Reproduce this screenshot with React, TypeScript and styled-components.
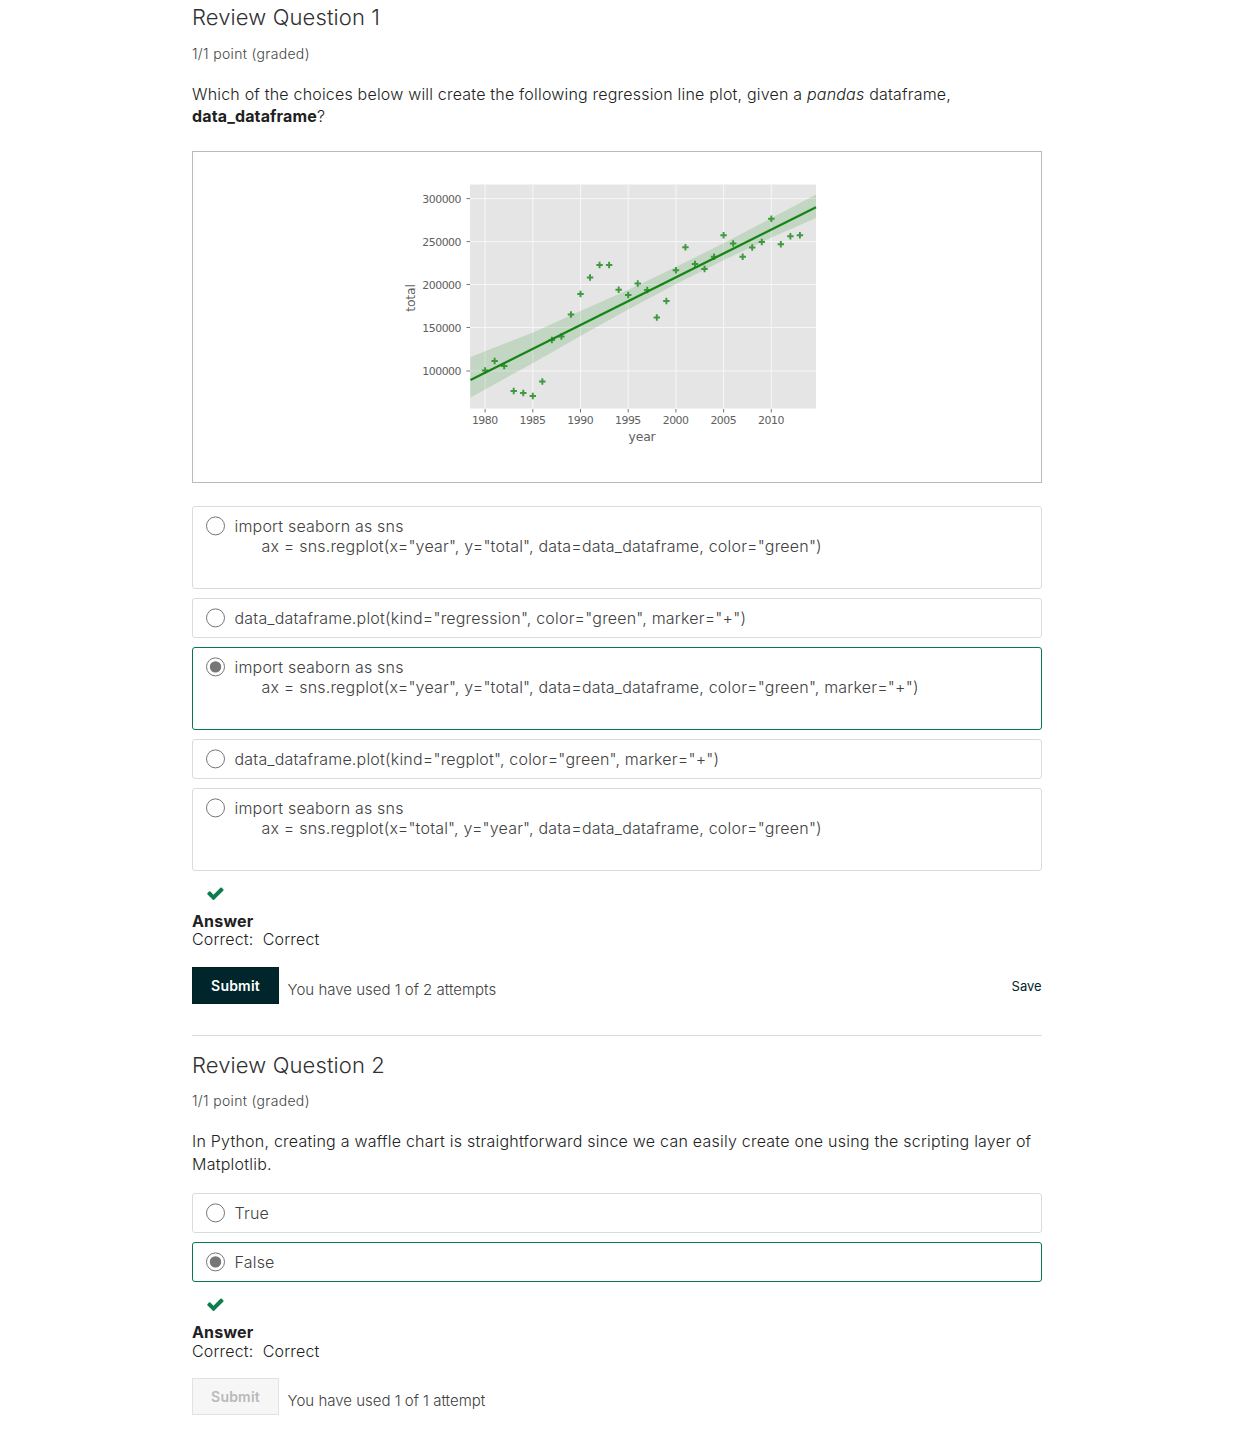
import React from "react";
import styled, { createGlobalStyle } from "styled-components";

const GlobalStyle = createGlobalStyle`
  * { box-sizing: border-box; }
  body {
    margin: 0;
    background: #fff;
    color: #212529;
    font-family: Inter, "Liberation Sans", sans-serif;
    font-weight: 300;
  }
`;

const Page = styled.main`
  width: 850px;
  margin-left: 192px;
  height: 1436px;
  overflow: hidden;
`;

const Problem = styled.section<{ $divided?: boolean }>`
  display: flow-root;
  height: ${(p) => (p.$divided ? "400px" : "1036px")};
  border-bottom: ${(p) => (p.$divided ? "0" : "1px solid #dcdcdc")};
`;

const Title = styled.h3<{ $top: number }>`
  margin: ${(p) => p.$top}px 0 0;
  font-size: 22px;
  line-height: 28px;
  font-weight: 300;
  letter-spacing: 0.12px;
  color: #313131;
`;

const Progress = styled.div<{ $top: number }>`
  margin-top: ${(p) => p.$top}px;
  font-size: 14px;
  line-height: 20px;
  letter-spacing: 0.33px;
  color: #454545;
`;

const Prompt = styled.p<{ $spacing: number; $leading: number }>`
  height: 45px;
  margin: 19px 0 0;
  font-size: 16px;
  line-height: ${(p) => p.$leading}px;
  letter-spacing: ${(p) => p.$spacing}px;
  color: #212121;

  strong { font-weight: 700; letter-spacing: 0.14px; }
`;

const Figure = styled.div`
  height: 332px;
  margin-top: 23px;
  padding: 19px 0 0 207px;
  border: 1px solid #b9bcbc;
`;

const Chart = styled.svg`
  display: block;
  font-family: "DejaVu Sans", sans-serif;
  font-size: 10.9px;
  letter-spacing: -0.48px;
  font-weight: 400;
  fill: #606060;
`;

const AxisTitle = styled.text`
  font-size: 12.4px;
  letter-spacing: -0.2px;
`;

const Choices = styled.div<{ $top: number }>`
  display: flex;
  flex-direction: column;
  gap: 9px;
  margin-top: ${(p) => p.$top}px;
`;

const Choice = styled.label<{ $selected?: boolean; $tall?: boolean }>`
  display: flex;
  align-items: flex-start;
  height: ${(p) => (p.$tall ? 83 : 40)}px;
  padding: 9px 13px;
  border: 1px solid ${(p) => (p.$selected ? "#0a7650" : "#dadcdc")};
  border-radius: 3px;
`;

const Radio = styled.svg`
  flex: none;
  display: block;
  width: 19px;
  height: 20px;
  margin-right: 9.5px;
`;

const ChoiceText = styled.span`
  font-size: 16px;
  line-height: 20.4px;
  letter-spacing: 0.195px;
  white-space: pre;
  color: #414141;
`;

const CodeLine = styled.span`
  display: block;
  padding-left: 27px;
`;

const Status = styled.div`
  height: 19px;
  margin: 12.5px 0 0 14px;

  svg { display: block; }
`;

const Answer = styled.div<{ $leading: number }>`
  height: 37px;
  margin-top: 9.5px;
  font-size: 16px;
  line-height: ${(p) => p.$leading}px;
  letter-spacing: 0.17px;
  color: #212121;
  white-space: pre;

  strong { display: block; font-weight: 700; }
`;

const Actions = styled.div`
  display: flex;
  align-items: flex-start;
  height: 37px;
  margin-top: 18px;
`;

const Submit = styled.button`
  width: 87px;
  height: 37px;
  padding: 0;
  border: 1px solid #002121;
  border-radius: 0;
  background: #00262b;
  color: #fff;
  font: 600 14px/20px Inter, sans-serif;
  letter-spacing: 0.2px;

  &:disabled {
    border-color: #e2e2e2;
    background: #f6f6f6;
    color: #b9b9b9;
  }
`;

const Attempts = styled.span`
  flex: 1;
  margin: 12px 0 0 8.6px;
  font-size: 15px;
  line-height: 22px;
  color: #414141;
`;

const Save = styled.button`
  padding: 0;
  margin: 9px 0.3px 0 0;
  border: 0;
  background: none;
  color: #00262b;
  font: 400 13px/20px Inter, sans-serif;
`;

const points = [
  370.5, 361, 366, 391, 393, 396, 381.5, 340, 336.5, 314.5, 294, 277.5, 265, 265, 289.7, 295, 283.5,
  290, 317.5, 301, 270.3, 247.3, 264, 269, 256.7, 235.3, 243.5, 256.7, 247.5, 242, 218.7, 244.3,
  236.2, 235.3,
];
const rows = [198.6, 241.6, 284.5, 327.5, 371];
const columns = [1980, 1985, 1990, 1995, 2000, 2005, 2010];
const xOf = (year: number) => 485.1 + (year - 1980) * 9.54;

function RegressionPlot() {
  return (
    <Chart width="430" height="290" viewBox="400 171 430 290">
      <rect x="470" y="184.5" width="346" height="224" fill="#e5e5e5" />
      {rows.map((y, i) => (
        <g key={y}>
          <path d={`M470 ${y}H816`} stroke="#f7f7f7" />
          <path d={`M466.5 ${y}H470`} stroke="#777" />
          <text x="461" y={y + 4} textAnchor="end">{300000 - i * 50000}</text>
        </g>
      ))}
      {columns.map((year) => (
        <g key={year}>
          <path d={`M${xOf(year)} 184.5V408.5`} stroke="#f7f7f7" />
          <path d={`M${xOf(year)} 409V412.5`} stroke="#777" />
          <text x={xOf(year) - 0.3} y="424" textAnchor="middle">{year}</text>
        </g>
      ))}
      <path
        d="M470.5 357L533 332.5L580.5 311L629 289.5L676 267L724 243L771.5 218L816 194.5V218L771.5 237.5L724 260L676 284L629 309L580.5 336L533 363L470.5 397.5Z"
        fill="#008000"
        fillOpacity="0.15"
      />
      <path
        d={points.map((y, i) => `M${xOf(1980 + i) - 3.2} ${y}h6.4m-3.2-3.2v6.4`).join("")}
        stroke="#168616"
        strokeOpacity="0.8"
        strokeWidth="1.9"
        fill="none"
      />
      <path d="M470.5 380L816 207.3" stroke="#158515" strokeWidth="2.3" />
      <AxisTitle x="642" y="440.5" textAnchor="middle">year</AxisTitle>
      <AxisTitle transform="translate(415 298) rotate(-90)" textAnchor="middle">total</AxisTitle>
    </Chart>
  );
}

function CheckMark() {
  return (
    <Status>
      <svg width="18.8" height="18.8" viewBox="0 0 1792 1792" fill="#0d7d4d">
        <path d="M1671 566q0 40-28 68l-724 724-136 136q-28 28-68 28t-68-28l-136-136-362-362q-28-28-28-68t28-68l136-136q28-28 68-28t68 28l294 295 656-657q28-28 68-28t68 28l136 136q28 28 28 68z" />
      </svg>
    </Status>
  );
}

type Option = { text: string; code?: string; selected?: boolean };

function ChoiceList({ options, top }: { options: Option[]; top: number }) {
  return (
    <Choices $top={top}>
      {options.map((o, i) => (
        <Choice key={i} $selected={o.selected} $tall={!!o.code}>
          <Radio viewBox="0 0 19 20">
            <circle cx="9.5" cy="9.9" r="9" fill="#fff" stroke="#767676" />
            {o.selected && <circle cx="9.5" cy="9.9" r="5.7" fill="#767676" />}
          </Radio>
          <ChoiceText>
            {o.text}
            {o.code && <CodeLine>{o.code}</CodeLine>}
          </ChoiceText>
        </Choice>
      ))}
    </Choices>
  );
}

const firstOptions: Option[] = [
  { text: "import seaborn as sns", code: 'ax = sns.regplot(x="year", y="total", data=data_dataframe, color="green")' },
  { text: 'data_dataframe.plot(kind="regression", color="green", marker="+")' },
  {
    text: "import seaborn as sns",
    code: 'ax = sns.regplot(x="year", y="total", data=data_dataframe, color="green", marker="+")',
    selected: true,
  },
  { text: 'data_dataframe.plot(kind="regplot", color="green", marker="+")' },
  { text: "import seaborn as sns", code: 'ax = sns.regplot(x="total", y="year", data=data_dataframe, color="green")' },
];

export default function App() {
  return (
    <Page>
      <GlobalStyle />
      <Problem>
        <Title $top={3}>Review Question 1</Title>
        <Progress $top={13}>1/1 point (graded)</Progress>
        <Prompt $spacing={0.195} $leading={22}>
          Which of the choices below will create the following regression line plot, given a <em>pandas</em>{" "}
          dataframe, <strong>data_dataframe</strong>?
        </Prompt>
        <Figure>
          <RegressionPlot />
        </Figure>
        <ChoiceList top={23} options={firstOptions} />
        <CheckMark />
        <Answer $leading={18}>
          <strong>Answer</strong>
          {"Correct:  Correct"}
        </Answer>
        <Actions>
          <Submit>Submit</Submit>
          <Attempts>You have used 1 of 2 attempts</Attempts>
          <Save>Save</Save>
        </Actions>
      </Problem>
      <Problem $divided>
        <Title $top={15}>Review Question 2</Title>
        <Progress $top={12}>1/1 point (graded)</Progress>
        <Prompt $spacing={0.23} $leading={22.5}>
          In Python, creating a waffle chart is straightforward since we can easily create one using the scripting
          layer of Matplotlib.
        </Prompt>
        <ChoiceList top={18} options={[{ text: "True" }, { text: "False", selected: true }]} />
        <CheckMark />
        <Answer $leading={18.5}>
          <strong>Answer</strong>
          {"Correct:  Correct"}
        </Answer>
        <Actions>
          <Submit disabled>Submit</Submit>
          <Attempts>You have used 1 of 1 attempt</Attempts>
        </Actions>
      </Problem>
    </Page>
  );
}
